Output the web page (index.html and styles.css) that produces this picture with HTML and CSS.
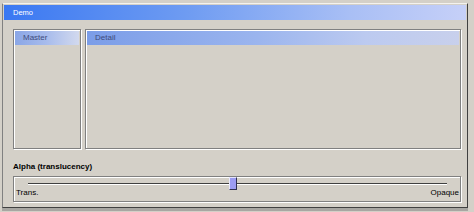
FILE: index.html
```html
<html>
<head>
<meta charset="utf-8">
<title>Demo</title>
<link rel="stylesheet" href="styles.css">
</head>
<body>
	<div class="window">
		<div class="title">Demo</div>
		<div class="content">
			<div class="panels">
				<div class="panel master">
					<div class="header">Master</div>
				</div>
				<div class="panel detail">
					<div class="header">Detail</div>
				</div>
			</div>

			<p class="label">Alpha (translucency)</p>

			<div class="slider">
				<div class="track"></div>
				<div class="thumb"></div>
				<div class="ticks">
					<span>Trans.</span>
					<span>Opaque</span>
				</div>
			</div>
		</div>
	</div>
</body>
</html>
```

FILE: styles.css
```css
* {
	margin: 0;
	padding: 0;
	box-sizing: border-box;
}

body {
	background-color: #d4d0c8;
	font-family: "Liberation Sans", Arial, sans-serif;
	font-size: 8px;
	padding: 3px 0 0 2px;
}

.window {
	width: 466px;
	height: 205px;
	border-left: 1px solid #808080;
	border-top: 1px solid #f4f2ee;
	border-right: 1px solid #404040;
	border-bottom: 1px solid #404040;
	box-shadow: 0 3px 0 #a8a6a2;
}

.title {
	margin: 1px 1px 0 1px;
	height: 15px;
	line-height: 15px;
	padding-left: 9px;
	color: #fff;
	font-size: 7.5px;
	background: linear-gradient(to right, #3a78f2 0%, #6f9cf2 40%, #a9bff5 75%, #c6d0f8 100%);
}

.content {
	padding: 9px 6px 0 10px;
}

.panels {
	display: flex;
	gap: 4px;
	height: 120px;
}

.panel {
	border: 1px solid #808080;
	padding: 1px;
	box-shadow: inset 1px 1px #fff, 1px 1px 0 #fff;
}

.master {
	width: 68px;
}

.detail {
	flex: 1;
}

.header {
	height: 14px;
	line-height: 14px;
	padding-left: 8px;
	color: #3f4c7c;
}

.master .header {
	background: linear-gradient(to right, #8aa6e6 0%, #a8bcec 50%, #d2d9ee 100%);
}

.detail .header {
	background: linear-gradient(to right, #7b9de8 0%, #9ab4ee 45%, #bccaf0 75%, #c8d0ec 100%);
}

.label {
	margin-top: 13px;
	font-weight: bold;
	height: 10px;
	line-height: 10px;
}

.slider {
	position: relative;
	margin-top: 4px;
	height: 26px;
	border: 1px solid #808080;
	box-shadow: inset 1px 1px #fff, 1px 1px 0 #fff;
	padding-top: 6px;
}

.track {
	margin: 0 13px 0 14px;
	height: 2px;
	border-top: 1px solid #404040;
	border-bottom: 1px solid #fff;
}

.thumb {
	position: absolute;
	left: 215px;
	top: 0;
	width: 8px;
	height: 13px;
	background-color: #9c9cf2;
	border-top: 1px solid #e8e8ff;
	border-left: 1px solid #e8e8ff;
	border-right: 1px solid #303050;
	border-bottom: 1px solid #303050;
}

.ticks {
	display: flex;
	justify-content: space-between;
	padding: 3px 1px 0 2px;
	line-height: 10px;
}
```
